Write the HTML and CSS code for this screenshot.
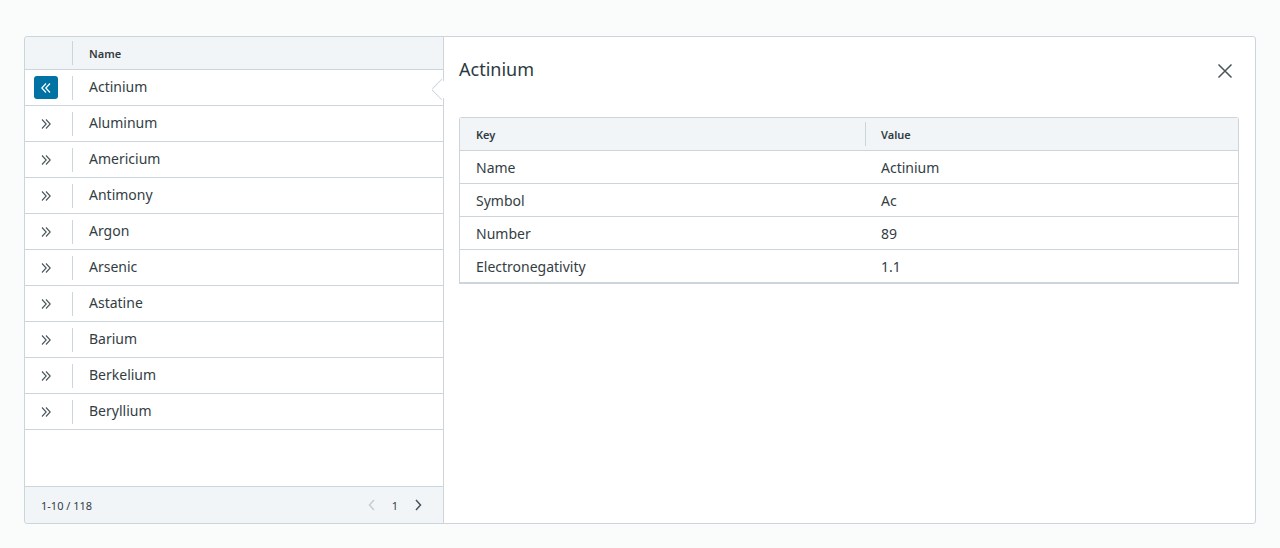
FILE: index.html
```html
<!DOCTYPE html>
<html>
<head>
<meta charset="utf-8">
<link rel="stylesheet" href="styles.css">
</head>
<body>
<div class="grid">
  <div class="list">
    <div class="list-head">
      <div class="cell-btn"><span class="sep"></span></div>
      <div class="cell-name head-text">Name</div>
    </div>
    <div class="rows">
      <div class="row active">
        <div class="cell-btn"><span class="expand on"><svg width="14" height="12" viewBox="0 0 14 12"><path d="M7 1.5 L2.8 6 L7 10.5 M11 1.5 L6.8 6 L11 10.5" fill="none" stroke="#fff" stroke-width="1.2"/></svg></span><span class="sep"></span></div>
        <div class="cell-name">Actinium</div>
        <span class="caret"></span>
      </div>
      <div class="row"><div class="cell-btn"><span class="expand"><svg width="14" height="12" viewBox="0 0 14 12"><path d="M3 1.5 L7.2 6 L3 10.5 M7 1.5 L11.2 6 L7 10.5" fill="none" stroke="#49545a" stroke-width="1.1"/></svg></span><span class="sep"></span></div><div class="cell-name">Aluminum</div></div>
      <div class="row"><div class="cell-btn"><span class="expand"><svg width="14" height="12" viewBox="0 0 14 12"><path d="M3 1.5 L7.2 6 L3 10.5 M7 1.5 L11.2 6 L7 10.5" fill="none" stroke="#49545a" stroke-width="1.1"/></svg></span><span class="sep"></span></div><div class="cell-name">Americium</div></div>
      <div class="row"><div class="cell-btn"><span class="expand"><svg width="14" height="12" viewBox="0 0 14 12"><path d="M3 1.5 L7.2 6 L3 10.5 M7 1.5 L11.2 6 L7 10.5" fill="none" stroke="#49545a" stroke-width="1.1"/></svg></span><span class="sep"></span></div><div class="cell-name">Antimony</div></div>
      <div class="row"><div class="cell-btn"><span class="expand"><svg width="14" height="12" viewBox="0 0 14 12"><path d="M3 1.5 L7.2 6 L3 10.5 M7 1.5 L11.2 6 L7 10.5" fill="none" stroke="#49545a" stroke-width="1.1"/></svg></span><span class="sep"></span></div><div class="cell-name">Argon</div></div>
      <div class="row"><div class="cell-btn"><span class="expand"><svg width="14" height="12" viewBox="0 0 14 12"><path d="M3 1.5 L7.2 6 L3 10.5 M7 1.5 L11.2 6 L7 10.5" fill="none" stroke="#49545a" stroke-width="1.1"/></svg></span><span class="sep"></span></div><div class="cell-name">Arsenic</div></div>
      <div class="row"><div class="cell-btn"><span class="expand"><svg width="14" height="12" viewBox="0 0 14 12"><path d="M3 1.5 L7.2 6 L3 10.5 M7 1.5 L11.2 6 L7 10.5" fill="none" stroke="#49545a" stroke-width="1.1"/></svg></span><span class="sep"></span></div><div class="cell-name">Astatine</div></div>
      <div class="row"><div class="cell-btn"><span class="expand"><svg width="14" height="12" viewBox="0 0 14 12"><path d="M3 1.5 L7.2 6 L3 10.5 M7 1.5 L11.2 6 L7 10.5" fill="none" stroke="#49545a" stroke-width="1.1"/></svg></span><span class="sep"></span></div><div class="cell-name">Barium</div></div>
      <div class="row"><div class="cell-btn"><span class="expand"><svg width="14" height="12" viewBox="0 0 14 12"><path d="M3 1.5 L7.2 6 L3 10.5 M7 1.5 L11.2 6 L7 10.5" fill="none" stroke="#49545a" stroke-width="1.1"/></svg></span><span class="sep"></span></div><div class="cell-name">Berkelium</div></div>
      <div class="row"><div class="cell-btn"><span class="expand"><svg width="14" height="12" viewBox="0 0 14 12"><path d="M3 1.5 L7.2 6 L3 10.5 M7 1.5 L11.2 6 L7 10.5" fill="none" stroke="#49545a" stroke-width="1.1"/></svg></span><span class="sep"></span></div><div class="cell-name">Beryllium</div></div>
    </div>
    <div class="list-foot">
      <span class="count">1-10 / 118</span>
      <div class="pager">
        <svg width="10" height="14" viewBox="0 0 10 14"><path d="M7 2 L2.5 7 L7 12" fill="none" stroke="#c5cdd1" stroke-width="1.5"/></svg>
        <span class="page">1</span>
        <svg width="10" height="14" viewBox="0 0 10 14"><path d="M3 2 L7.5 7 L3 12" fill="none" stroke="#49545a" stroke-width="1.5"/></svg>
      </div>
    </div>
  </div>
  <div class="detail">
    <div class="detail-head">
      <h2 class="title">Actinium</h2>
      <svg class="close" width="16" height="16" viewBox="0 0 16 16"><path d="M1.5 1.5 L14.5 14.5 M14.5 1.5 L1.5 14.5" stroke="#49545a" stroke-width="1.5" fill="none"/></svg>
    </div>
    <div class="kv">
      <div class="kv-row kv-head"><div class="kv-key">Key</div><div class="kv-val"><span class="vsep"></span>Value</div></div>
      <div class="kv-row"><div class="kv-key">Name</div><div class="kv-val">Actinium</div></div>
      <div class="kv-row"><div class="kv-key">Symbol</div><div class="kv-val">Ac</div></div>
      <div class="kv-row"><div class="kv-key">Number</div><div class="kv-val">89</div></div>
      <div class="kv-row"><div class="kv-key">Electronegativity</div><div class="kv-val">1.1</div></div>
    </div>
  </div>
</div>
</body>
</html>
```
FILE: styles.css
```css
html, body { margin: 0; padding: 0; }
body {
  background: #fafcfc;
  font-family: "Noto Sans", "Open Sans", sans-serif;
  color: #2b3a42;
  padding: 36px 24px 24px 24px;
}
.grid {
  display: flex;
  height: 488px;
  border: 1px solid #ccd5da;
  border-radius: 3px;
  background: #fff;
  box-sizing: border-box;
}
.list {
  width: 418px;
  display: flex;
  flex-direction: column;
  border-right: 1px solid #ccd5da;
  position: relative;
}
.list-head {
  height: 32px;
  display: flex;
  align-items: center;
  background: #f1f5f8;
  border-bottom: 1px solid #ccd5da;
  border-radius: 3px 0 0 0;
}
.cell-btn {
  width: 48px;
  height: 100%;
  display: flex;
  align-items: center;
  position: relative;
}
.sep {
  position: absolute;
  right: 0;
  top: 50%;
  transform: translateY(-50%);
  width: 1px;
  height: 24px;
  background: #ccd5da;
}
.cell-name {
  padding-left: 16px;
  font-size: 14px;
}
.head-text {
  font-size: 11px;
  font-weight: 600;
  color: #313c42;
}
.rows { flex: 1; }
.row {
  height: 35px;
  display: flex;
  align-items: center;
  border-bottom: 1px solid #ccd5da;
  position: relative;
}
.row .cell-name { padding-bottom: 2px; color: #333d44; }
.expand {
  margin-left: 9px;
  width: 24px;
  height: 23px;
  border-radius: 3px;
  display: flex;
  align-items: center;
  justify-content: center;
}
.expand.on { background: #0072a3; }
.caret {
  position: absolute;
  right: -1px;
  top: 9px;
  width: 12px;
  height: 22px;
  overflow: hidden;
  z-index: 2;
}
.caret::before {
  content: "";
  position: absolute;
  left: 2px;
  top: 3px;
  width: 15px;
  height: 15px;
  background: #fff;
  border-left: 1px solid #ccd5da;
  border-bottom: 1px solid #ccd5da;
  transform: rotate(45deg);
  box-sizing: border-box;
}
.list-foot {
  height: 36px;
  background: #f1f5f8;
  border-top: 1px solid #ccd5da;
  display: flex;
  align-items: center;
  justify-content: space-between;
  padding: 0 20px 0 16px;
  font-size: 11px;
  color: #333d44;
  border-radius: 0 0 0 3px;
}
.pager { display: flex; align-items: center; gap: 15px; }
.page { font-size: 11px; }
.detail {
  flex: 1;
  padding: 0 16px 0 15px;
  display: flex;
  flex-direction: column;
}
.detail-head {
  height: 80px;
  display: flex;
  align-items: flex-start;
  justify-content: space-between;
}
.title {
  margin: 20px 0 0 0;
  font-size: 18px;
  font-weight: 400;
  color: #2b3a42;
}
.close { margin-top: 26px; margin-right: 6px; }
.kv {
  border: 1px solid #ccd5da;
  border-bottom: 2px solid #ccd5da;
  border-radius: 3px 3px 0 0;
}
.kv-row {
  display: flex;
  height: 32px;
  align-items: center;
  border-bottom: 1px solid #ccd5da;
  font-size: 14px;
  color: #333d44;
}
.kv-row:last-child { border-bottom: none; }
.kv-head {
  background: #f1f5f8;
  font-size: 11px;
  font-weight: 600;
  color: #313c42;
}
.kv-key { width: 405px; padding-left: 16px; box-sizing: border-box; flex-shrink: 0; }
.kv-val { flex: 1; padding-left: 16px; position: relative; }
.vsep {
  position: absolute;
  left: 0;
  top: 50%;
  transform: translateY(-50%);
  width: 1px;
  height: 24px;
  background: #ccd5da;
}
```
